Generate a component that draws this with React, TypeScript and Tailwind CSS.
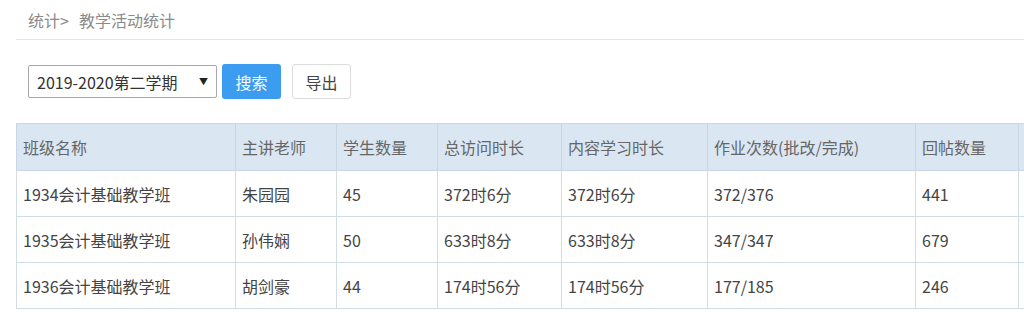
import React from "react";

const rows = [
  ["1934会计基础教学班", "朱园园", "45", "372时6分", "372时6分", "372/376", "441", ""],
  ["1935会计基础教学班", "孙伟娴", "50", "633时8分", "633时8分", "347/347", "679", ""],
  ["1936会计基础教学班", "胡剑豪", "44", "174时56分", "174时56分", "177/185", "246", ""],
];

const heads = ["班级名称", "主讲老师", "学生数量", "总访问时长", "内容学习时长", "作业次数(批改/完成)", "回帖数量", ""];
const widths = ["w-[219px]", "w-[101px]", "w-[101px]", "w-[124px]", "w-[146px]", "w-[208px]", "w-[103px]", "w-[120px]"];

const App = () => {
  return (
    <div className="w-[1024px] h-[317px] overflow-hidden bg-white text-[#444] font-['Microsoft_YaHei','Noto_Sans_CJK_SC',sans-serif]">
      <div className="ml-4 h-10 border-b border-[#e6e6e6] flex items-center pl-3 text-[16px] text-[#8a8a8a]">
        <span>统计&gt;</span>
        <span className="ml-[10px]">教学活动统计</span>
      </div>
      <div className="flex items-center mt-6 ml-[28px] gap-[5px]">
        <div className="w-[189px] h-[33px] border border-[#a9a9a9] rounded-[2px] flex items-center justify-between pl-[8px] pr-[8px] text-[16px] text-[#333]">
          <span>2019-2020第二学期</span>
          <span className="text-[9px] text-[#222]">▼</span>
        </div>
        <button className="w-[59px] h-[35px] rounded-[3px] bg-[#3c9cf0] text-white text-[16px]">搜索</button>
        <button className="ml-[6px] w-[59px] h-[35px] rounded-[3px] border border-[#dcdcdc] bg-white text-[#444] text-[16px]">导出</button>
      </div>
      <div className="ml-4 mt-[24px] w-[1150px]">
        <table className="table-fixed border-collapse text-left text-[16px]">
          <thead>
            <tr className="h-[47px] bg-[#dae6f2]">
              {heads.map((h, i) => (
                <th key={i} className={`${widths[i]} border border-[#c9d6e3] px-[6px] font-normal text-[#666]`}>
                  {h}
                </th>
              ))}
            </tr>
          </thead>
          <tbody>
            {rows.map((r, ri) => (
              <tr key={ri} className="h-[46px]">
                {r.map((c, ci) => (
                  <td key={ci} className="border border-[#d3dbe3] px-[6px] text-[#444]">
                    {c}
                  </td>
                ))}
              </tr>
            ))}
          </tbody>
        </table>
      </div>
    </div>
  );
};

export default App;
